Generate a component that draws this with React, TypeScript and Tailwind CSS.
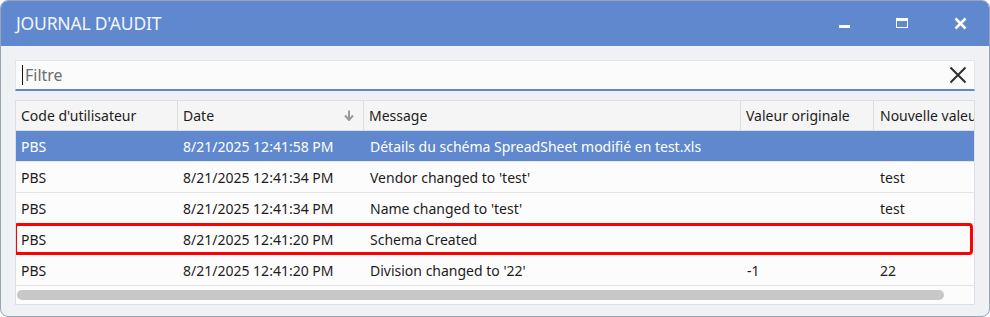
import React, { FC } from "react";

type Row = {
  user: string;
  date: string;
  message: string;
  original: string;
  next: string;
};

const rows: Row[] = [
  { user: "PBS", date: "8/21/2025 12:41:58 PM", message: "Détails du schéma SpreadSheet modifié en test.xls", original: "", next: "" },
  { user: "PBS", date: "8/21/2025 12:41:34 PM", message: "Vendor changed to 'test'", original: "", next: "test" },
  { user: "PBS", date: "8/21/2025 12:41:34 PM", message: "Name changed to 'test'", original: "", next: "test" },
  { user: "PBS", date: "8/21/2025 12:41:20 PM", message: "Schema Created", original: "", next: "" },
  { user: "PBS", date: "8/21/2025 12:41:20 PM", message: "Division changed to '22'", original: "-1", next: "22" },
];

const SortArrow: FC = () => (
  <svg width="10" height="11" viewBox="0 0 10 11" className="shrink-0">
    <path d="M5 0.5 V9" stroke="#9a9a9a" strokeWidth="2" />
    <path d="M1 5.5 L5 10 L9 5.5" fill="none" stroke="#9a9a9a" strokeWidth="2" />
  </svg>
);

const Cells: FC<{ row: Row }> = ({ row }) => (
  <>
    <div className="w-[162px] shrink-0 pl-[5px]">{row.user}</div>
    <div className="w-[186px] shrink-0 pl-[5px]">{row.date}</div>
    <div className="w-[377px] shrink-0 pl-[6px] whitespace-nowrap">{row.message}</div>
    <div className="w-[133px] shrink-0 pl-[6px]">{row.original}</div>
    <div className="w-[120px] shrink-0 pl-[6px]">{row.next}</div>
  </>
);

export default function App() {
  return (
    <div className="w-[990px] h-[317px] bg-white" style={{ fontFamily: "'Noto Sans', 'Open Sans', sans-serif" }}>
      <div className="w-[990px] h-[317px] flex flex-col rounded-[8px] border border-[#9aa4b2] bg-[#eff1f5] overflow-hidden">
        {/* title bar */}
        <div className="h-[45px] shrink-0 bg-[#5f88cf] flex items-center pl-[15px] pr-[22px]">
          <span className="text-[17.5px] text-[#f2f5fb] tracking-[-0.2px]">JOURNAL D'AUDIT</span>
          <div className="ml-auto flex items-center gap-[45px]">
            <svg width="12" height="12" viewBox="0 0 12 12">
              <rect x="0" y="7" width="11" height="3" fill="#ffffff" />
            </svg>
            <svg width="13" height="12" viewBox="0 0 13 12">
              <rect x="0.5" y="0.5" width="11" height="9" fill="none" stroke="#ffffff" strokeWidth="1" />
              <rect x="0.5" y="0.5" width="11" height="2.5" fill="#ffffff" />
            </svg>
            <svg width="13" height="13" viewBox="0 0 13 13">
              <path d="M1.5 1.5 L11.5 11.5 M11.5 1.5 L1.5 11.5" stroke="#ffffff" strokeWidth="2.6" />
            </svg>
          </div>
        </div>

        <div className="flex-1 flex flex-col px-[14px] pt-[14px] pb-[11px]">
          {/* filter */}
          <div className="h-[31px] shrink-0 flex items-center bg-[#fbfbfb] border border-[#e3e5e9] border-b-2 border-b-[#5f88cf]">
            <div className="ml-[6px] w-px h-[20px] bg-[#111]" />
            <span className="ml-[2px] text-[16px] text-[#6e6e6e]">Filtre</span>
            <svg className="ml-auto mr-[7px]" width="18" height="18" viewBox="0 0 18 18">
              <path d="M1.5 1.5 L16.5 16.5 M16.5 1.5 L1.5 16.5" stroke="#2d2d2d" strokeWidth="2" />
            </svg>
          </div>

          {/* grid */}
          <div className="mt-[9px] flex-1 flex flex-col border border-[#dcdfe4] bg-[#fcfcfc] overflow-hidden text-[14px] text-[#1c1c1c]">
            <div className="h-[30px] shrink-0 flex items-center bg-[#f5f5f5] border-b border-[#dcdfe4] whitespace-nowrap">
              <div className="w-[162px] shrink-0 pl-[5px] h-full flex items-center border-r border-[#dcdcdc]">Code d'utilisateur</div>
              <div className="w-[186px] shrink-0 pl-[5px] pr-[9px] h-full flex items-center justify-between border-r border-[#dcdcdc]">
                <span>Date</span>
                <SortArrow />
              </div>
              <div className="w-[377px] shrink-0 pl-[5px] h-full flex items-center border-r border-[#dcdcdc]">Message</div>
              <div className="w-[133px] shrink-0 pl-[5px] h-full flex items-center border-r border-[#dcdcdc]">Valeur originale</div>
              <div className="w-[120px] shrink-0 pl-[6px] h-full flex items-center">Nouvelle valeur</div>
            </div>

            {rows.map((row, i) => (
              <div
                key={i}
                className={`relative h-[31px] shrink-0 flex items-center border-b whitespace-nowrap ${
                  i === 0 ? "bg-[#5f88cf] text-white border-[#e4e4e4]" : "bg-[#fcfcfc] border-[#e4e4e4]"
                }`}
              >
                <Cells row={row} />
                {i === 3 && (
                  <div className="absolute left-[-2px] right-[1px] top-[-1px] bottom-[-1px] border-[3px] border-[#ff0000] rounded-[4px]" />
                )}
              </div>
            ))}

            <div className="flex-1 flex items-center pl-px">
              <div className="h-[10px] w-[927px] rounded-full bg-[#c8c8c8]" />
            </div>
          </div>
        </div>
      </div>
    </div>
  );
}
